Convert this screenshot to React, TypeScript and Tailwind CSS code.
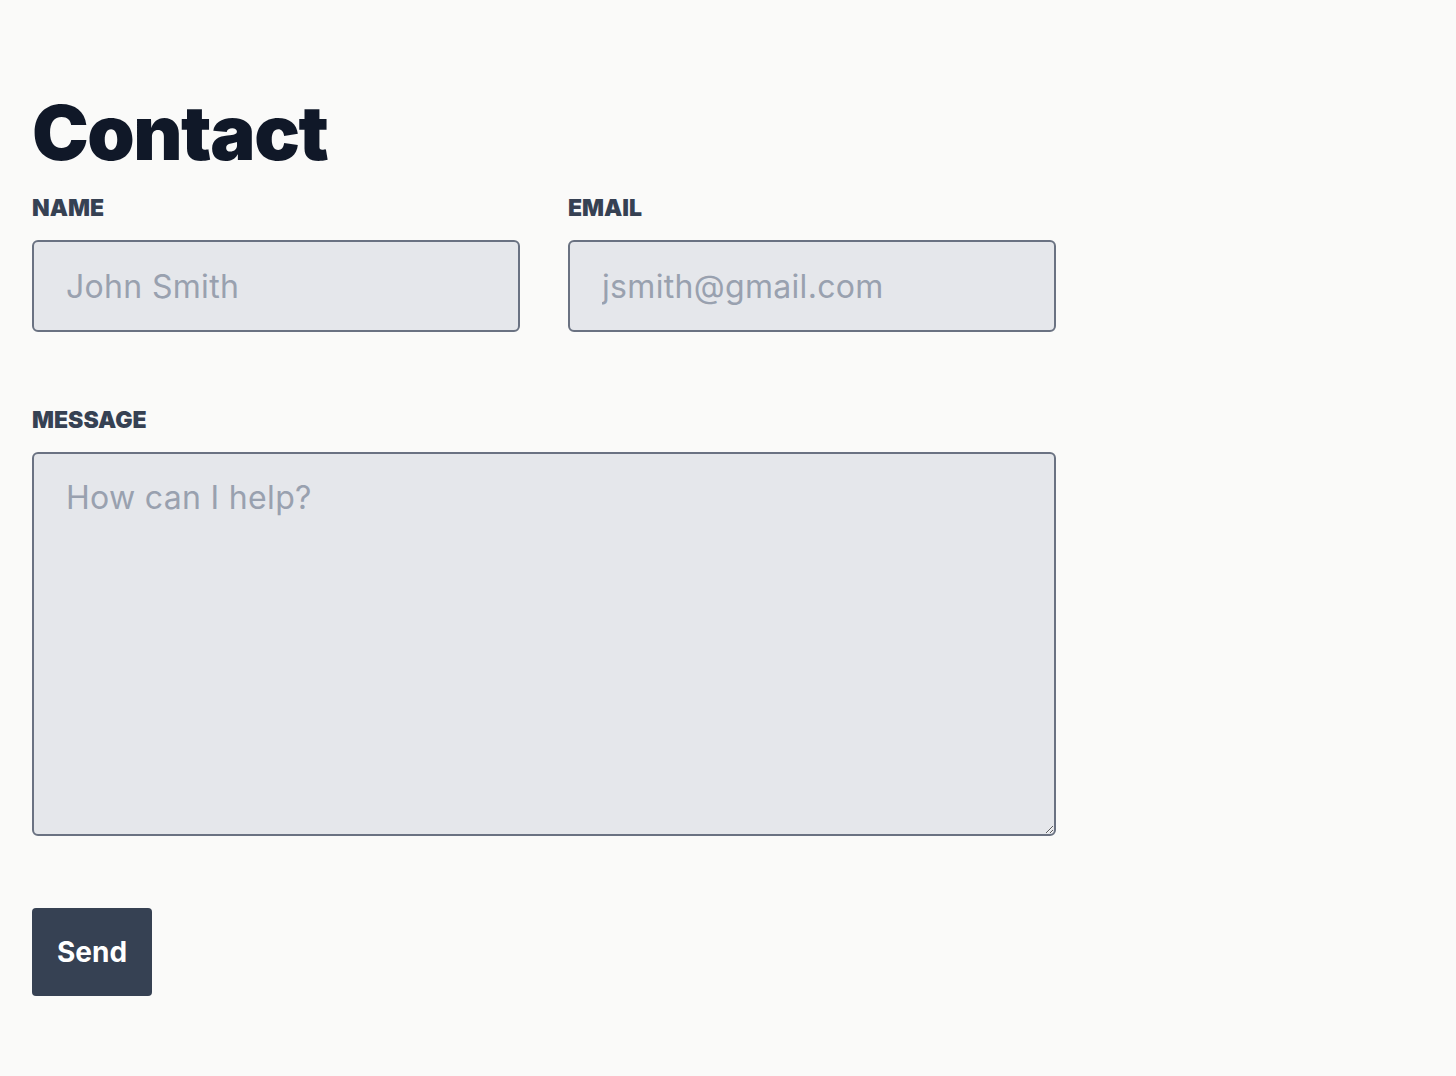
import React from 'react';

const font = { fontFamily: 'Inter, "Noto Sans", sans-serif' };

const App: React.FC = () => {
  return (
    <div className="min-h-screen bg-[#fafaf9] px-8 pt-[94px]" style={font}>
      <div className="max-w-5xl">
        <h1 className="text-[76px] font-black leading-none tracking-[-0.02em] text-gray-900">Contact</h1>
        <form className="mt-[22px]" onSubmit={(e) => e.preventDefault()}>
          <div className="grid grid-cols-2 gap-12">
            <div>
              <label className="block text-[23px] font-black uppercase leading-[32px] text-gray-700">Name</label>
              <input
                type="text"
                placeholder="John Smith"
                className="mt-4 h-[92px] w-full rounded-md border-2 border-gray-500 bg-gray-200 px-8 text-[32px] tracking-[0.01em] text-gray-700 placeholder-gray-400 focus:outline-none"
              />
            </div>
            <div>
              <label className="block text-[23px] font-black uppercase leading-[32px] text-gray-700">Email</label>
              <input
                type="email"
                placeholder="jsmith@gmail.com"
                className="mt-4 h-[92px] w-full rounded-md border-2 border-gray-500 bg-gray-200 px-8 text-[32px] tracking-[0.01em] text-gray-700 placeholder-gray-400 focus:outline-none"
              />
            </div>
          </div>
          <div className="mt-[72px]">
            <label className="block text-[23px] font-black uppercase leading-[32px] text-gray-700">Message</label>
            <textarea
              placeholder="How can I help?"
              className="mt-4 block h-[384px] w-full rounded-md border-2 border-gray-500 bg-gray-200 px-8 py-5 text-[32px] tracking-[0.01em] text-gray-700 placeholder-gray-400 focus:outline-none"
            />
          </div>
          <button
            type="submit"
            className="mt-[72px] h-[88px] w-[120px] rounded-sm bg-gray-700 text-[28px] font-bold text-white"
          >
            Send
          </button>
        </form>
      </div>
    </div>
  );
};

export default App;
